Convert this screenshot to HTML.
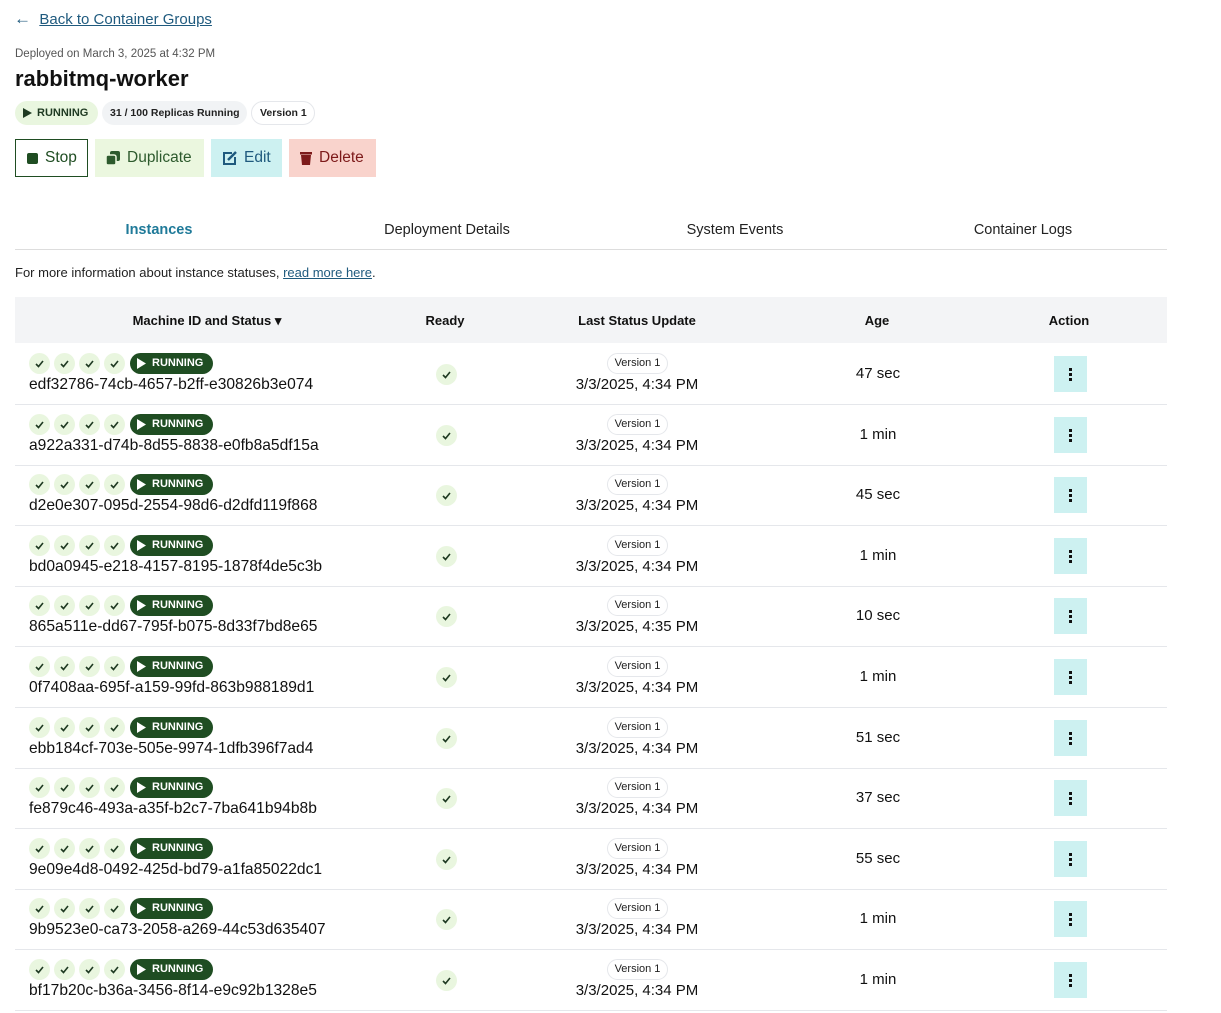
<!DOCTYPE html>
<html><head><meta charset="utf-8">
<style>
*{box-sizing:border-box;margin:0;padding:0}
body{width:1221px;height:1013px;background:#fff;font-family:"Liberation Sans",sans-serif;color:#111;position:relative;overflow:hidden}
.abs{position:absolute;white-space:nowrap}
.back{left:14px;top:9px;font-size:15px;color:#1f5a7e}
.back a{color:#1f5a7e;text-decoration:underline}
.dep{left:15px;top:48px;font-size:11.5px;color:#555}
h1{position:absolute;left:15px;top:66px;font-size:22px;font-weight:bold;color:#111}
.pill{position:absolute;top:101px;height:24px;border-radius:12px;font-size:11px;line-height:24px;color:#222;padding:0 9px;white-space:nowrap}
.btn{position:absolute;top:139px;height:38px;font-size:15.5px;line-height:38px;display:flex;align-items:center;gap:7px;padding-left:11px}
.tab{position:absolute;top:222px;font-size:14.5px;color:#222;text-align:center;width:288px}
.tline{left:15px;top:249px;width:1152px;height:1px;background:#ddd}
.info{left:15px;top:265px;font-size:13px;color:#222}
.info a{color:#1f5a7e}
.thead{left:15px;top:297px;width:1152px;height:46px;background:#f3f4f6}
.th{position:absolute;top:313px;font-size:13px;font-weight:bold;color:#111;text-align:center}
.row{position:absolute;left:15px;width:1152px;height:61px;border-bottom:1px solid #e5e7eb}
.ck{position:absolute;width:21px;height:21px;border-radius:50%;background:#e9f6df;top:9px}
.ck svg{position:absolute;left:5px;top:5px}
.run{position:absolute;left:115px;top:9px;width:83px;height:21px;border-radius:11px;background:#1f4d22;color:#fff;font-size:11px;font-weight:bold;line-height:21px;padding-left:22px}
.run svg{position:absolute;left:7px;top:5px}
.id{position:absolute;left:14px;top:32px;font-size:15.6px;color:#111;white-space:nowrap}
.rdy{position:absolute;left:421px;top:20px;width:21px;height:21px;border-radius:50%;background:#e9f6df}
.rdy svg{position:absolute;left:5px;top:5px}
.ver{position:absolute;left:592px;top:9px;width:61px;height:21px;border:1px solid #e5e7eb;border-radius:11px;font-size:11px;text-align:center;line-height:19px;color:#222}
.dt{position:absolute;left:522px;width:200px;text-align:center;top:32px;font-size:15px}
.age{position:absolute;left:763px;width:200px;text-align:center;top:21px;font-size:15px}
.act{position:absolute;left:1039px;top:12px;width:33px;height:36px;background:#cdf1f1}
.act i{position:absolute;left:15px;width:3px;height:3px;background:#111}
</style></head><body>
<div class="abs back"><span style="font-size:17px">&#8592;</span>&nbsp; <a>Back to Container Groups</a></div>
<div class="abs dep">Deployed on March 3, 2025 at 4:32 PM</div>
<h1>rabbitmq-worker</h1>
<div class="pill" style="left:15px;width:83px;background:#e9f6df;font-weight:bold;padding-left:22px;color:#1f3a22"><svg class="abs" style="left:8px;top:7px" width="9" height="10"><path d="M0 0L9 5L0 10Z" fill="#1f3a22"/></svg>RUNNING</div>
<div class="pill" style="left:102px;width:145px;background:#f1f3f5;font-weight:bold;font-size:10.5px;padding:0 0 0 8px">31 / 100 Replicas Running</div>
<div class="pill" style="left:251px;width:64px;border:1px solid #e5e7eb;line-height:22px;font-weight:bold;font-size:10.5px;padding:0 0 0 8px">Version 1</div>

<div class="btn" style="left:15px;width:73px;border:1.5px solid #1f4d22;color:#1f4d22"><span style="width:11px;height:11px;background:#1f4d22;border-radius:2px;display:inline-block"></span>Stop</div>
<div class="btn" style="left:95px;width:109px;background:#ebf7df;color:#2d5a2d"><svg width="14" height="14"><rect x="4" y="0" width="10" height="10" rx="2" fill="#2d5a2d"/><rect x="0" y="4" width="10" height="10" rx="2" fill="#2d5a2d" stroke="#ebf7df" stroke-width="1.5"/></svg>Duplicate</div>
<div class="btn" style="left:211px;width:71px;background:#cdf1f1;color:#1f5a7e"><svg width="15" height="14"><path d="M10 2H2v11h11V6" fill="none" stroke="#1f5a7e" stroke-width="2"/><path d="M6 9l8-8" stroke="#1f5a7e" stroke-width="2.5"/></svg>Edit</div>
<div class="btn" style="left:289px;width:87px;background:#f9d3cc;color:#7d1a1a"><svg width="12" height="14"><rect x="0" y="1" width="12" height="2.5" fill="#7d1a1a"/><path d="M1 4h10l-1 10H2z" fill="#7d1a1a"/></svg>Delete</div>

<div class="tab" style="left:15px;color:#1f7a99;font-weight:bold;width:288px">Instances</div>
<div class="tab" style="left:303px">Deployment Details</div>
<div class="tab" style="left:591px">System Events</div>
<div class="tab" style="left:879px">Container Logs</div>
<div class="abs tline"></div>
<div class="abs info">For more information about instance statuses, <a style="text-decoration:underline">read more here</a>.</div>
<div class="abs thead"></div>
<div class="th" style="left:15px;width:384px">Machine ID and Status &#9662;</div>
<div class="th" style="left:399px;width:92px">Ready</div>
<div class="th" style="left:491px;width:292px">Last Status Update</div>
<div class="th" style="left:783px;width:188px">Age</div>
<div class="th" style="left:971px;width:196px">Action</div>
<div id="rows"></div>
<script>
var d=[["edf32786-74cb-4657-b2ff-e30826b3e074","4:34","47 sec"],["a922a331-d74b-8d55-8838-e0fb8a5df15a","4:34","1 min"],["d2e0e307-095d-2554-98d6-d2dfd119f868","4:34","45 sec"],["bd0a0945-e218-4157-8195-1878f4de5c3b","4:34","1 min"],["865a511e-dd67-795f-b075-8d33f7bd8e65","4:35","10 sec"],["0f7408aa-695f-a159-99fd-863b988189d1","4:34","1 min"],["ebb184cf-703e-505e-9974-1dfb396f7ad4","4:34","51 sec"],["fe879c46-493a-a35f-b2c7-7ba641b94b8b","4:34","37 sec"],["9e09e4d8-0492-425d-bd79-a1fa85022dc1","4:34","55 sec"],["9b9523e0-ca73-2058-a269-44c53d635407","4:34","1 min"],["bf17b20c-b36a-3456-8f14-e9c92b1328e5","4:34","1 min"]];
var ck='<svg width="11" height="11"><path d="M2 6l2.5 2.5L9 3" fill="none" stroke="#1f3a22" stroke-width="1.6"/></svg>';
var h='';
d.forEach(function(r,i){
var t=344+i*60.6;
h+='<div class="row" style="top:'+t+'px">';
for(var k=0;k<4;k++)h+='<div class="ck" style="left:'+(14+k*25)+'px">'+ck+'</div>';
h+='<div class="run"><svg width="9" height="11"><path d="M0 0L9 5.5L0 11Z" fill="#fff"/></svg>RUNNING</div>';
h+='<div class="id">'+r[0]+'</div><div class="rdy">'+ck+'</div><div class="ver">Version 1</div><div class="dt">3/3/2025, '+r[1]+' PM</div><div class="age">'+r[2]+'</div><div class="act"><i style="top:12px"></i><i style="top:17px"></i><i style="top:22px"></i></div></div>';
});
document.getElementById('rows').innerHTML=h;
</script>
</body></html>
